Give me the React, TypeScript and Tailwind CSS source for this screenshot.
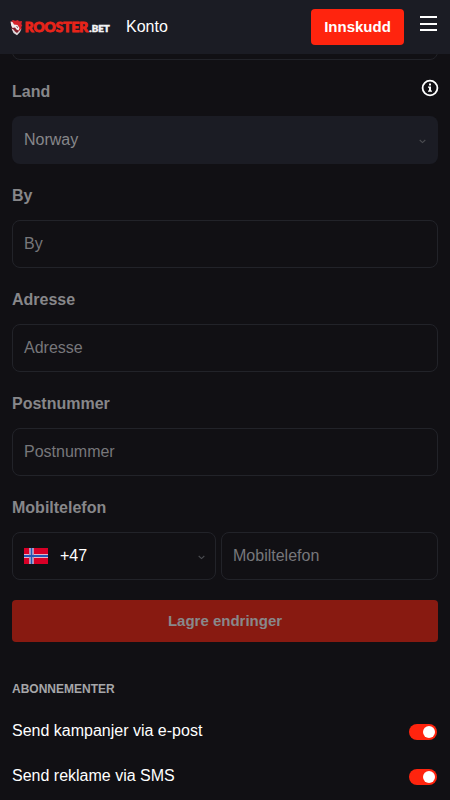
import React from "react";

function RoosterLogo() {
  return (
    <svg width="102" height="20" viewBox="0 0 102 20" className="shrink-0" role="img" aria-label="Rooster.bet">
      <path d="M.5 4.5 3 3 7 4 12 4.500 11.500 11 7 18 2 13Z" fill="#7e1c28" />
      <path d="M2.500 3 5 4 8 3 9 4.500 12 4 11 7 12.300 8.500 11 10 11.500 12 8.500 15 9 10 5 8 2 7Z" fill="#d5232b" />
      <path d="M.6 4.500 2.500 5 4 7.500 7.500 8 9.500 11 8.500 13.500 6.500 12.500 5 10.500 2.500 11 1.200 8.500Z" fill="#f2ecee" />
      <path d="M1.500 11.500 3.500 12.500 5 14.500 7 16 9 14 11.500 11.500 10 15 7 18.300 3.500 16Z" fill="#ded7da" />
      <path d="M6 9 8 10 7.500 11Z" fill="#4b1821" />
      <text x="14.700" y="15.200" textLength="63.600" lengthAdjust="spacingAndGlyphs" fill="#e8241a" stroke="#e8241a" strokeWidth="0.900" className="font-['Lato'] text-[13.3px] font-black">ROOSTER</text>
      <text x="79.300" y="15.200" textLength="20.500" lengthAdjust="spacingAndGlyphs" fill="#f4f4f5" stroke="#f4f4f5" strokeWidth="0.500" className="font-['Lato'] text-[9.3px] font-black">.BET</text>
    </svg>
  );
}

function Caret() {
  return (
    <svg width="7" height="5" viewBox="0 0 7 5" fill="none" stroke="#4b4c51" strokeWidth="1.1">
      <path d="M.7 1 3.500 3.600 6.300 1" />
    </svg>
  );
}

function Label({ children }: { children: React.ReactNode }) {
  return <div className="flex h-14 items-start pt-5 text-base leading-6 font-bold text-[#87878a]">{children}</div>;
}

function Field({ name }: { name: string }) {
  return (
    <div>
      <Label>{name}</Label>
      <div className="flex h-12 items-center rounded-lg border border-[#222329] px-[11px] pb-px text-[#77777b]">{name}</div>
    </div>
  );
}

function NorwayFlag() {
  return (
    <svg width="24" height="16" viewBox="0 0 24 16" shapeRendering="crispEdges">
      <path d="M0 0h24v16H0z" fill="#d80027" />
      <path d="M0 6h24v4H0z" fill="#e3b6c9" />
      <path d="M5 0h5v16H5z" fill="#bd8fb1" />
      <path d="M6 0h3v16H6z" fill="#8f9dcb" />
      <path d="M7 0h1v16H7zM0 7h24v2H0z" fill="#2457b5" />
    </svg>
  );
}

function Switch() {
  return (
    <div className="flex h-4 w-7 items-center justify-end rounded-full bg-[#ff240e] pr-0.5">
      <div className="size-3 rounded-full bg-white" />
    </div>
  );
}

export default function App() {
  return (
    <div className="h-[800px] w-[450px] overflow-hidden bg-[#111014] font-['Liberation_Sans',sans-serif] text-base text-white">
      <header className="flex h-[54px] items-center bg-[#1b1c24] pr-[13px] pl-[10px]">
        <RoosterLogo />
        <div className="ml-[14px] leading-6">Konto</div>
        <button className="ml-auto flex h-9 w-[93px] items-center justify-center rounded bg-[#ff240e] text-[15px] font-bold">Innskudd</button>
        <svg className="mb-2 ml-4 shrink-0" width="17" height="16" viewBox="0 0 17 16" shapeRendering="crispEdges">
          <path d="M0 1h17v2H0zM0 8h17v2H0zM0 14h17v2H0z" fill="white" />
        </svg>
      </header>

      <main className="px-3">
        <div className="h-1.5 overflow-hidden">
          <div className="-mt-[42px] h-12 rounded-lg border border-[#222329]" />
        </div>

        <div className="flex justify-between">
          <Label>Land</Label>
          <svg className="mt-[19px] -mr-px" width="18" height="18" viewBox="0 0 18 18" fill="none">
            <circle cx="9" cy="9" r="7.400" stroke="white" strokeWidth="1.800" />
            <path d="M8 4.500h2v2H8zM7 7.500h3v4h1v1.300H7v-1.300h1V8.800H7z" fill="white" />
          </svg>
        </div>
        <div className="flex h-12 items-center justify-between rounded-lg bg-[#1b1c24] pr-3 pb-px pl-3 text-[#87878a]">
          Norway
          <span className="mt-1"><Caret /></span>
        </div>

        <Field name="By" />
        <Field name="Adresse" />
        <Field name="Postnummer" />

        <Label>Mobiltelefon</Label>
        <div className="flex gap-[5px]">
          <div className="flex h-12 w-[204px] items-center rounded-lg border border-[#222329] px-[11px]">
            <NorwayFlag />
            <span className="ml-3 pb-px">+47</span>
            <span className="mt-0.5 -mr-px ml-auto"><Caret /></span>
          </div>
          <div className="flex h-12 flex-1 items-center rounded-lg border border-[#222329] px-[11px] pb-px text-[#77777b]">Mobiltelefon</div>
        </div>

        <button className="mt-5 flex h-[42px] w-full items-center justify-center rounded bg-[#881a11] text-[15px] font-bold text-[#88888a]">Lagre endringer</button>

        <h2 className="mt-[38px] text-xs leading-[18px] font-bold text-[#a6a6a9]">ABONNEMENTER</h2>
        <div className="mt-[21px] flex h-6 items-center justify-between pr-px">
          <span>Send kampanjer via e-post</span>
          <span className="mt-0.5"><Switch /></span>
        </div>
        <div className="mt-[21px] flex h-6 items-center justify-between pr-px">
          <span>Send reklame via SMS</span>
          <span className="mt-0.5"><Switch /></span>
        </div>
      </main>
    </div>
  );
}
